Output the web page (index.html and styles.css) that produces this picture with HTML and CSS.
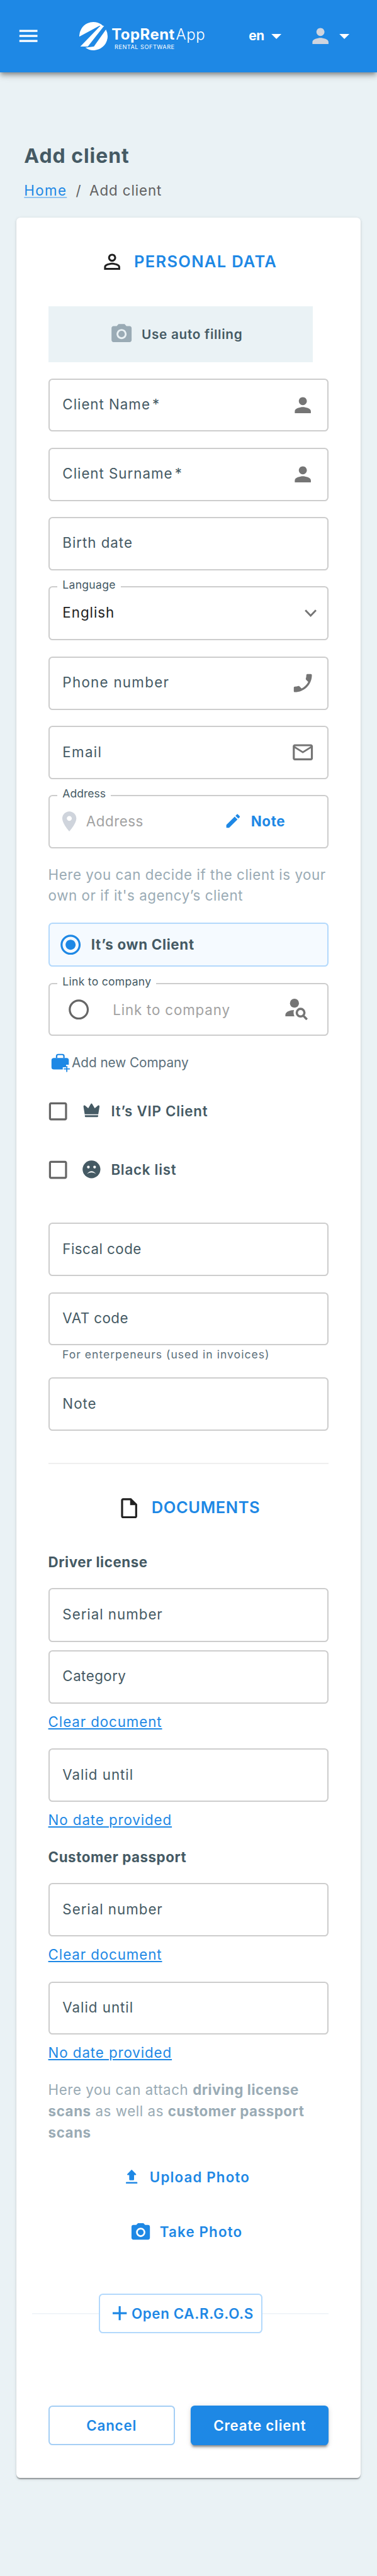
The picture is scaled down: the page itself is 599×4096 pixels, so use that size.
FILE: index.html
```html
<!DOCTYPE html>
<html lang="en">
<head>
<meta charset="utf-8">
<title>Add client</title>
<link rel="stylesheet" href="styles.css">
</head>
<body>
<svg class="defs" width="0" height="0" aria-hidden="true">
  <symbol id="person" viewBox="0 0 24 24"><path d="M12 12c2.21 0 4-1.79 4-4s-1.79-4-4-4-4 1.79-4 4 1.79 4 4 4zm0 2c-2.67 0-8 1.34-8 4v2h16v-2c0-2.66-5.33-4-8-4z"/></symbol>
  <symbol id="caret" viewBox="0 0 24 24"><path d="M7 10l5 5 5-5z"/></symbol>
  <symbol id="camera" viewBox="0 0 24 24"><circle cx="12" cy="12" r="3.2"/><path d="M9 2 7.17 4H4c-1.1 0-2 .9-2 2v12c0 1.1.9 2 2 2h16c1.1 0 2-.9 2-2V6c0-1.1-.9-2-2-2h-3.17L15 2H9zm3 15c-2.76 0-5-2.24-5-5s2.24-5 5-5 5 2.24 5 5-2.24 5-5 5z"/></symbol>
  <symbol id="box" viewBox="0 0 24 24"><path d="M19 5v14H5V5h14m0-2H5c-1.1 0-2 .9-2 2v14c0 1.1.9 2 2 2h14c1.1 0 2-.9 2-2V5c0-1.1-.9-2-2-2z"/></symbol>
</svg>

<header class="topbar">
  <svg class="icon menu" viewBox="0 0 24 24"><path d="M3 18h18v-2H3v2zm0-5h18v-2H3v2zm0-7v2h18V6H3z"/></svg>
  <div class="logo">
    <svg class="logo-mark" viewBox="0 0 56 56">
      <path d="M0 29A28 28 0 0 1 47 7.500L40 7.500Z"/>
      <path d="M42 7.500H49.500L17 49H2Z"/>
      <path d="M12 51L29 49L53 15A28 28 0 0 1 12 51Z"/>
    </svg>
    <div class="logo-text">
      <div class="brand"><b>TopRent</b><span>App</span></div>
      <div class="tagline">RENTAL SOFTWARE</div>
    </div>
  </div>
  <div class="lang"><span>en</span><svg class="icon"><use href="#caret"/></svg></div>
  <div class="account"><svg class="icon avatar"><use href="#person"/></svg><svg class="icon"><use href="#caret"/></svg></div>
</header>

<main>
  <h1 class="title">Add client</h1>
  <nav class="crumbs"><a class="home">Home</a><span class="slash">/</span><span class="here">Add client</span></nav>

  <section class="card">
    <h2 class="section-title">
      <svg class="icon dark" viewBox="0 0 24 24"><path d="M12 5.900c1.160 0 2.100.94 2.100 2.100s-.94 2.100-2.100 2.100S9.900 9.160 9.900 8s.94-2.100 2.100-2.100m0 9c2.970 0 6.100 1.460 6.100 2.100v1.100H5.900V17c0-.64 3.130-2.100 6.100-2.100M12 4C9.790 4 8 5.790 8 8s1.790 4 4 4 4-1.790 4-4-1.790-4-4-4zm0 9c-2.670 0-8 1.340-8 4v3h16v-3c0-2.660-5.330-4-8-4z"/></svg>
      <span>PERSONAL DATA</span>
    </h2>

    <button class="autofill"><svg class="icon"><use href="#camera"/></svg><span>Use auto filling</span></button>

    <div class="field"><span class="label">Client Name<i class="star">*</i></span><svg class="icon end"><use href="#person"/></svg></div>
    <div class="field"><span class="label">Client Surname<i class="star">*</i></span><svg class="icon end"><use href="#person"/></svg></div>
    <div class="field"><span class="label">Birth date</span></div>
    <div class="field tall select">
      <span class="float">Language</span>
      <span class="label value">English</span>
      <svg class="chevron" viewBox="0 0 24 15"><path d="M1.500 1.500 12 12.500 22.500 1.500"/></svg>
    </div>
    <div class="field"><span class="label wide">Phone number</span>
      <svg class="icon end" viewBox="0 0 24 24"><path d="M17.380 10.790l-2.200-2.200c-.28-.28-.36-.67-.25-1.020.37-1.120.57-2.320.57-3.570 0-.55.45-1 1-1H20c.55 0 1 .45 1 1 0 9.390-7.610 17-17 17-.55 0-1-.45-1-1v-3.490c0-.55.45-1 1-1 1.240 0 2.450-.2 3.570-.57.35-.12.75-.03 1.020.24l2.200 2.200c2.830-1.450 5.150-3.760 6.590-6.590z"/></svg></div>
    <div class="field"><span class="label wide">Email</span>
      <svg class="icon end" viewBox="0 0 24 24"><path d="M22 6c0-1.100-.9-2-2-2H4c-1.100 0-2 .9-2 2v12c0 1.100.9 2 2 2h16c1.100 0 2-.9 2-2V6zm-2 0l-8 5-8-5h16zm0 12H4V8l8 5 8-5v10z"/></svg></div>
    <div class="field address">
      <span class="float tight">Address</span>
      <svg class="icon pin" viewBox="0 0 24 24"><path d="M12 2C8.130 2 5 5.130 5 9c0 5.250 7 13 7 13s7-7.750 7-13c0-3.870-3.130-7-7-7zm0 9.500c-1.380 0-2.500-1.120-2.500-2.500s1.120-2.500 2.500-2.500 2.500 1.120 2.500 2.500-1.120 2.500-2.500 2.500z"/></svg>
      <span class="placeholder">Address</span>
      <span class="note-link">
        <svg class="pencil" viewBox="0 0 24 24"><path d="M3 17.460v3.040c0 .28.22.5.5.5h3.040c.13 0 .26-.05.35-.15L17.810 9.940l-3.750-3.750L3.150 17.100c-.1.100-.15.220-.15.360zM20.710 7.040c.39-.39.39-1.020 0-1.410l-2.340-2.340c-.39-.39-1.020-.39-1.410 0l-1.830 1.830 3.750 3.750 1.830-1.830z"/></svg>
        Note</span>
    </div>

    <p class="hint own">Here you can decide if the client is your<br>own or if it's agency’s client</p>

    <div class="choice">
      <svg class="icon" viewBox="0 0 24 24"><path d="M12 7c-2.760 0-5 2.240-5 5s2.240 5 5 5 5-2.240 5-5-2.240-5-5-5zm0-5C6.480 2 2 6.480 2 12s4.480 10 10 10 10-4.480 10-10S17.520 2 12 2zm0 18c-4.420 0-8-3.580-8-8s3.580-8 8-8 8 3.580 8 8-3.580 8-8 8z"/></svg>
      <span>It’s own Client</span>
    </div>

    <div class="field company">
      <span class="float">Link to company</span>
      <svg class="icon radio" viewBox="0 0 24 24"><path d="M12 2C6.480 2 2 6.480 2 12s4.480 10 10 10 10-4.480 10-10S17.520 2 12 2zm0 18c-4.420 0-8-3.580-8-8s3.580-8 8-8 8 3.580 8 8-3.580 8-8 8z"/></svg>
      <span class="placeholder">Link to company</span>
      <svg class="search" viewBox="0 0 46 44"><circle cx="18.500" cy="9.200" r="9.200"/><path d="M17.500 23C10 23 0 26.500 0 33V36H18.500Q15.500 29.500 17.500 23Z"/><circle class="lens" cx="31" cy="28.500" r="7.800"/><path class="lens" d="M36.500 34.500 44 42.300"/></svg>
    </div>

    <div class="add-company">
      <svg viewBox="0 0 40 40"><path class="handle" d="M11.200 9V5.500Q11.200 2.200 14.500 2.200H22.500Q25.800 2.200 25.800 5.500V9"/><path d="M6 9H31Q35.500 9 35.500 13.500V22.500H30V27.500H23.500V32H6Q1 32 1 27.500V13.500Q1 9 6 9Z"/><path class="plus" d="M31.500 25V37M25.500 31H37.500"/></svg>
      <span>Add new Company</span>
    </div>

    <div class="check vip">
      <svg class="icon"><use href="#box"/></svg>
      <svg class="mood" viewBox="0 0 36 36"><path d="M2 8Q2 5 5 6L11.500 11.500 16.500 3Q18 .8 19.500 3L24.500 11.500 31 6Q34 5 34 8L31.500 23.500H4.500ZM4.800 25.300H31.200V27.500Q31.200 29.200 29.500 29.200H6.500Q4.800 29.200 4.800 27.500Z"/></svg>
      <span>It’s VIP Client</span>
    </div>
    <div class="check black">
      <svg class="icon"><use href="#box"/></svg>
      <svg class="mood" viewBox="0 0 36 36"><circle cx="18" cy="18" r="17.700"/><g class="face"><circle cx="11.800" cy="13.500" r="2.700"/><circle cx="24.200" cy="13.500" r="2.700"/><path d="M9 27Q18 16 27 27Q18 21.500 9 27Z"/></g></svg>
      <span>Black list</span>
    </div>

    <div class="field fiscal"><span class="label snug">Fiscal code</span></div>
    <div class="field"><span class="label snug">VAT code</span></div>
    <p class="helper">For enterpeneurs (used in invoices)</p>
    <div class="field remark"><span class="label">Note</span></div>

    <hr class="rule">

    <h2 class="section-title docs">
      <svg class="icon dark" viewBox="0 0 24 24"><path d="M14 2H6c-1.100 0-2 .9-2 2v16c0 1.100.89 2 1.990 2H18c1.100 0 2-.9 2-2V8l-6-6zM6 20V4h7v5h5v11H6z"/></svg>
      <span>DOCUMENTS</span>
    </h2>

    <h3 class="sub first">Driver license</h3>
    <div class="field serial tall"><span class="label">Serial number</span></div>
    <div class="field category"><span class="label snug">Category</span></div>
    <a class="link">Clear document</a>
    <div class="field valid"><span class="label">Valid until</span></div>
    <a class="link">No date provided</a>

    <h3 class="sub">Customer passport</h3>
    <div class="field serial"><span class="label">Serial number</span></div>
    <a class="link">Clear document</a>
    <div class="field valid"><span class="label">Valid until</span></div>
    <a class="link">No date provided</a>

    <p class="hint attach">Here you can attach <b>driving license<br>scans</b> as well as <b>customer passport<br>scans</b></p>

    <div class="action upload">
      <svg viewBox="0 0 23 28"><path d="M10.300.8Q11.500-.6 12.700.8L20.300 8.800Q21 10.600 19 10.600H16.300V19.300Q16.300 21 14.600 21H8.400Q6.700 21 6.700 19.300V10.600H4Q2 10.600 2.700 8.800ZM1.500 24.300H21.500Q23 24.300 23 26.100T21.500 28H1.500Q0 28 0 26.100T1.500 24.300Z"/></svg>
      <span>Upload Photo</span>
    </div>
    <div class="action take">
      <svg><use href="#camera"/></svg>
      <span>Take Photo</span>
    </div>

    <div class="cargos">
      <button class="cargos-btn"><svg viewBox="0 0 28 28"><path d="M14 0V28M0 14H28"/></svg><span>Open CA.R.G.O.S</span></button>
    </div>

    <div class="footer">
      <button class="btn cancel">Cancel</button>
      <button class="btn create">Create client</button>
    </div>
  </section>
</main>
</body>
</html>
```
FILE: styles.css
```css
/* 1rem is ten layout units; the page is 750 units wide */
html { font-size: 7.983px; }
* { box-sizing: border-box; }
body {
  margin: 0;
  height: 4096px;
  overflow: hidden;
  background: #eaf2f5;
  color: #455a64;
  font: 400 2.8rem/4.2rem Inter, "Open Sans", sans-serif;
  letter-spacing: .04em;
}
h1, h2, h3, p { margin: 0; }
button { font: inherit; letter-spacing: inherit; color: inherit; padding: 0; border: 0; background: none; }
svg { display: block; flex: none; fill: currentColor; }
.defs { position: absolute; }
.icon { width: 4.8rem; height: 4.8rem; }
span { white-space: nowrap; }

/* Top bar */
.topbar {
  position: relative;
  display: flex;
  align-items: flex-start;
  height: 14.4rem;
  padding: 4.8rem 0 0 3.2rem;
  background: #1e88e5;
  color: #fff;
  box-shadow: 0 .4rem .8rem -.2rem rgba(0,0,0,.3), 0 .8rem 1rem rgba(0,0,0,.16), 0 .2rem 2rem rgba(0,0,0,.12);
}
.logo { display: flex; width: 26rem; margin: -.4rem 0 0 7.8rem; }
.logo-mark { width: 5.6rem; height: 5.6rem; }
.logo-text { padding: 1rem 0 0 .8rem; }
.brand { display: flex; font-size: 3rem; line-height: 3rem; letter-spacing: .02em; }
.brand b { font-weight: 700; }
.brand span { font-weight: 300; margin-left: .2rem; letter-spacing: .03em; }
.tagline { margin: .2rem 0 0 .6rem; font-size: 1.15rem; line-height: 1.4rem; letter-spacing: .055em; white-space: nowrap; }
.lang { display: flex; margin-left: 7.7rem; font-size: 2.6rem; line-height: 4.8rem; font-weight: 700; letter-spacing: -.01em; }
.lang span { width: 3.1rem; }
.account { display: flex; margin-left: 4rem; }
.avatar { color: #cfd4de; }

/* Page heading */
.title { margin: 14.2rem 0 0 4.8rem; font-size: 4rem; line-height: 5rem; font-weight: 700; letter-spacing: .031em; }
.crumbs { display: flex; margin: 2.2rem 0 0 4.8rem; color: #616161; }
.home { width: 8.8rem; color: #1e88e5; letter-spacing: .06em; text-decoration: underline; text-decoration-color: #93c5f1; text-decoration-thickness: .2rem; text-underline-offset: .3rem; }
.slash { margin-left: 1.5rem; width: 2.7rem; }

/* Card */
.card {
  margin: 3.4rem 3.2rem 0;
  height: 450.2rem;
  padding: 6.3rem 6.4rem 0;
  border-radius: .8rem;
  background: #fff;
  box-shadow: 0 .4rem .2rem -.2rem rgba(0,0,0,.2), 0 .2rem .2rem rgba(0,0,0,.14), 0 .2rem .6rem rgba(0,0,0,.12);
}
.section-title { display: flex; justify-content: center; align-items: center; gap: 2rem; height: 4.8rem; font-size: 3.2rem; font-weight: 600; letter-spacing: .05em; color: #1e88e5; }
.section-title span { padding-bottom: .1rem; }
.docs { margin-top: 6.4rem; letter-spacing: .021em; gap: 2.1rem; }
.docs span { padding-bottom: .3rem; }
.dark { color: #212121; }

.autofill { display: flex; align-items: center; gap: 1.6rem; width: 52.6rem; height: 11.2rem; margin-top: 6.5rem; padding-left: 12.2rem; background: #eaf2f5; font-size: 2.6rem; font-weight: 600; letter-spacing: .033em; }
.autofill .icon { color: #9aabb5; }

/* Outlined fields */
.field {
  position: relative;
  display: flex;
  align-items: center;
  height: 10.6rem;
  margin-top: 3.2rem;
  padding: 0 2.5rem 0 2.6rem;
  border: 2px solid #cdcdcd;
  border-radius: .8rem;
}
.tall { height: 10.8rem; }
.select { padding-right: 2.2rem; }
.label { padding-bottom: .3rem; letter-spacing: .043em; }
.wide { letter-spacing: .057em; }
.snug { letter-spacing: .02em; }
.value { color: #212121; }
.star { font-style: normal; margin-left: .4rem; }
.end { margin-left: auto; color: #757575; }
.float { position: absolute; top: -2rem; left: 1.6rem; padding: 0 1rem; background: #fff; font-size: 2.2rem; line-height: 3rem; letter-spacing: .016em; }
.tight { letter-spacing: 0; }
.chevron { width: 2.4rem; height: 1.5rem; margin-left: auto; fill: none; stroke: #757575; stroke-width: 3.6; }
.address { padding-left: 1.6rem; padding-bottom: .2rem; }
.placeholder { color: #a2a2a2; letter-spacing: .03em; }
.pin { color: #cfd4dc; }
.address .placeholder { margin-left: .9rem; letter-spacing: .023em; }
.note-link { display: flex; align-items: center; gap: 1.8rem; margin: 0 5.9rem 0 auto; color: #1e88e5; font-weight: 700; letter-spacing: .03em; }
.pencil { width: 3.6rem; height: 3.6rem; }

.hint { margin-top: 3.1rem; color: #9aabb5; letter-spacing: .0245em; white-space: nowrap; }
.hint b { font-weight: 700; letter-spacing: .025em; }
.choice { display: flex; align-items: center; gap: 1.7rem; height: 8.8rem; margin-top: 3.3rem; padding-left: 1.8rem; border: 2px solid #b3d9fc; border-radius: .8rem; background: #f5faff; font-weight: 700; letter-spacing: .03em; }
.choice .icon { color: #1e88e5; }
.company { padding: 0 3.9rem 0 3.4rem; }
.radio { color: #666; }
.company .placeholder { margin-left: 4.4rem; letter-spacing: .037em; padding-top: .1rem; }
.search { width: 4.6rem; height: 4.4rem; margin-left: auto; padding-bottom: .1rem; color: #757575; }
.lens { fill: none; stroke: currentColor; stroke-width: 4.6; }

.add-company { display: flex; align-items: center; gap: .2rem; height: 3.6rem; margin-top: 3.5rem; padding-left: .5rem; color: #5b6f7b; font-size: 2.6rem; letter-spacing: -.003em; }
.add-company svg { width: 4rem; height: 4rem; margin-top: .4rem; color: #1e88e5; }
.handle { fill: none; stroke: currentColor; stroke-width: 2.8; }
.plus { stroke: currentColor; stroke-width: 2.2; }

.check { display: flex; align-items: center; height: 4.8rem; margin-left: -.4rem; font-weight: 600; letter-spacing: .033em; }
.check .icon { color: #666; }
.mood { width: 3.6rem; height: 3.6rem; margin: 0 2.1rem 0 2.4rem; }
.face { fill: #fff; }
.vip { margin-top: 5.5rem; }
.black { margin-top: 6.8rem; }
.fiscal { margin-top: 8.2rem; }
.helper { margin: .3rem 0 0 2.8rem; color: #5b6f7b; font-size: 2.2rem; line-height: 3rem; letter-spacing: .058em; white-space: nowrap; }
.remark { margin-top: 3.1rem; }
.rule { height: 2px; margin: 6.4rem 0 0; border: 0; background: #efefef; }

/* Documents */
.sub { font-size: 2.8rem; line-height: 4.2rem; font-weight: 700; margin-top: 3.2rem; letter-spacing: .024em; }
.sub.first { margin-top: 6.2rem; }
.serial { margin-top: 3.1rem; }
.category { margin-top: 1.6rem; }
.link { display: block; margin-top: 1.5rem; color: #1e88e5; text-decoration: underline; text-decoration-thickness: .2rem; text-underline-offset: .3rem; }
.valid { margin-top: 3.3rem; }
.attach { margin-top: 3.2rem; }
.action { display: flex; align-items: center; height: 4.2rem; color: #1e88e5; font-weight: 600; letter-spacing: .051em; }
.upload { margin-top: 4.7rem; padding-left: 15.5rem; gap: 2.4rem; }
.upload svg { width: 2.3rem; height: 2.8rem; }
.take { margin-top: 6.8rem; padding-left: 16.2rem; gap: 1.6rem; }
.take svg { width: 4.4rem; height: 4.4rem; }

/* Divider runs wider than the fields on the left */
.cargos { display: flex; justify-content: center; margin: 10.2rem 0 0 -3.2rem; background: linear-gradient(#edf2f7, #edf2f7) 0 50% / 100% .2rem no-repeat; }
.cargos-btn { display: flex; align-items: center; gap: .9rem; width: 32.6rem; height: 7.8rem; padding-left: 2.6rem; border: 2px solid #b3d9fc; border-radius: .8rem; background: #fff; color: #1e88e5; font-weight: 600; letter-spacing: .029em; }
.cargos-btn svg { width: 2.8rem; height: 2.8rem; stroke: currentColor; stroke-width: 4; }

.footer { display: flex; gap: 3.2rem; margin-top: 14.4rem; }
.btn { height: 8rem; border-radius: .8rem; font-weight: 600; letter-spacing: .035em; }
.cancel { width: 25.2rem; border: 2px solid #a5cff5; color: #1e88e5; }
.create { flex: 1; background: #1e88e5; color: #fff; box-shadow: 0 .6rem .2rem -.4rem rgba(0,0,0,.2), 0 .4rem .4rem rgba(0,0,0,.2), 0 .2rem 1rem rgba(0,0,0,.12); }
```
